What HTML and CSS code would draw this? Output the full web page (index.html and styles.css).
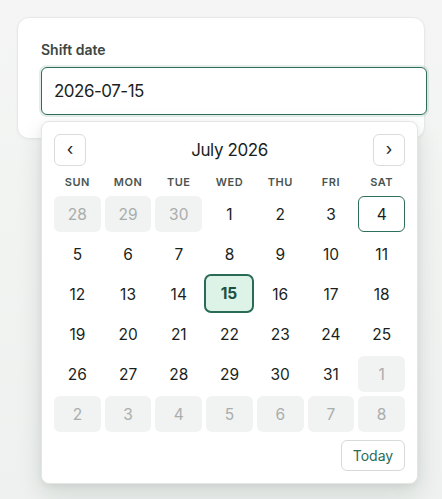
FILE: index.html
```html
<!DOCTYPE html>
<html lang="en">
<head>
<meta charset="utf-8">
<link rel="stylesheet" href="styles.css">
</head>
<body>
<div class="page">
  <div class="card">
    <label class="label" for="d">Shift date</label>
    <div class="field">
      <input id="d" class="input" type="text" value="2026-07-15">
      <div class="popup">
        <div class="head">
          <button class="nav">‹</button>
          <div class="title">July 2026</div>
          <button class="nav">›</button>
        </div>
        <div class="grid">
          <div class="wd">SUN</div><div class="wd">MON</div><div class="wd">TUE</div><div class="wd">WED</div><div class="wd">THU</div><div class="wd">FRI</div><div class="wd">SAT</div>
          <div class="day out">28</div><div class="day out">29</div><div class="day out">30</div><div class="day">1</div><div class="day">2</div><div class="day">3</div><div class="day today">4</div>
          <div class="day">5</div><div class="day">6</div><div class="day">7</div><div class="day">8</div><div class="day">9</div><div class="day">10</div><div class="day">11</div>
          <div class="day">12</div><div class="day">13</div><div class="day">14</div><div class="day sel">15</div><div class="day">16</div><div class="day">17</div><div class="day">18</div>
          <div class="day">19</div><div class="day">20</div><div class="day">21</div><div class="day">22</div><div class="day">23</div><div class="day">24</div><div class="day">25</div>
          <div class="day">26</div><div class="day">27</div><div class="day">28</div><div class="day">29</div><div class="day">30</div><div class="day">31</div><div class="day out">1</div>
          <div class="day out">2</div><div class="day out">3</div><div class="day out">4</div><div class="day out">5</div><div class="day out">6</div><div class="day out">7</div><div class="day out">8</div>
        </div>
        <div class="foot"><button class="todaybtn">Today</button></div>
      </div>
    </div>
  </div>
</div>
</body>
</html>
```
FILE: styles.css
```css
* { box-sizing: border-box; }
html, body { margin: 0; height: 100%; }
body {
  background: linear-gradient(180deg, #f4f5f4 0%, #eef1ef 100%);
  font-family: Inter, "Noto Sans", sans-serif;
  color: #1b1f1d;
}
.page { padding: 17px; }
.card {
  background: #fff;
  border: 1px solid #e6e9e7;
  border-radius: 12px;
  padding: 23px;
  box-shadow: 0 1px 3px rgba(0,0,0,0.04);
}
.label {
  display: block;
  font-size: 14px;
  font-weight: 600;
  line-height: 18px;
  color: #3c4642;
  margin-bottom: 8px;
}
.field { position: relative; }
.input {
  box-sizing: content-box;
  display: block;
  width: 100%;
  height: 46px;
  padding: 0 12px;
  margin: 0;
  border: 1px solid #2d6e5c;
  border-radius: 6px;
  box-shadow: 0 0 0 2px rgba(45,110,92,0.12);
  font-family: inherit;
  font-size: 17px;
  letter-spacing: -0.5px;
  color: #1b1f1d;
  outline: none;
  background: #fff;
}
.popup {
  position: absolute;
  top: calc(100% + 6px);
  left: 0;
  width: 377px;
  background: #fff;
  border: 1px solid #e3e6e4;
  border-radius: 8px;
  padding: 12px;
  box-shadow: 0 10px 24px rgba(20,30,25,0.12), 0 2px 6px rgba(20,30,25,0.06);
}
.head {
  display: flex;
  align-items: center;
  justify-content: space-between;
  height: 32px;
}
.nav {
  width: 32px;
  height: 32px;
  border: 1px solid #d8dcda;
  border-radius: 6px;
  background: #fff;
  font-family: inherit;
  font-size: 17px;
  line-height: 1;
  color: #222;
  padding: 0 0 2px;
}
.title {
  font-size: 17px;
  font-weight: 400;
  letter-spacing: -0.4px;
  color: #1b1f1d;
}
.grid {
  display: grid;
  grid-template-columns: repeat(7, 1fr);
  grid-auto-rows: 36px;
  grid-template-rows: 20px;
  gap: 4px;
  margin-top: 6px;
}
.wd {
  display: flex;
  align-items: center;
  justify-content: center;
  font-size: 11px;
  font-weight: 600;
  letter-spacing: 0.5px;
  color: #4a5450;
}
.day {
  display: flex;
  align-items: center;
  justify-content: center;
  font-size: 15.5px;
  color: #1b1f1d;
  border-radius: 6px;
}
.out { background: #f1f2f2; color: #a9aeac; }
.today { border: 1px solid #2d6e5c; }
.sel {
  border: 2px solid #2a6b58;
  background: #def3e8;
  color: #1c4f40;
  font-weight: 700;
  margin: -2px -1px -1px -2px;
  border-radius: 7px;
}
.foot {
  display: flex;
  justify-content: flex-end;
  margin-top: 8px;
}
.todaybtn {
  width: 64px;
  height: 31px;
  border: 1px solid #d6dad8;
  border-radius: 6px;
  background: #fff;
  font-family: inherit;
  font-size: 14px;
  color: #2a6b58;
}
```
